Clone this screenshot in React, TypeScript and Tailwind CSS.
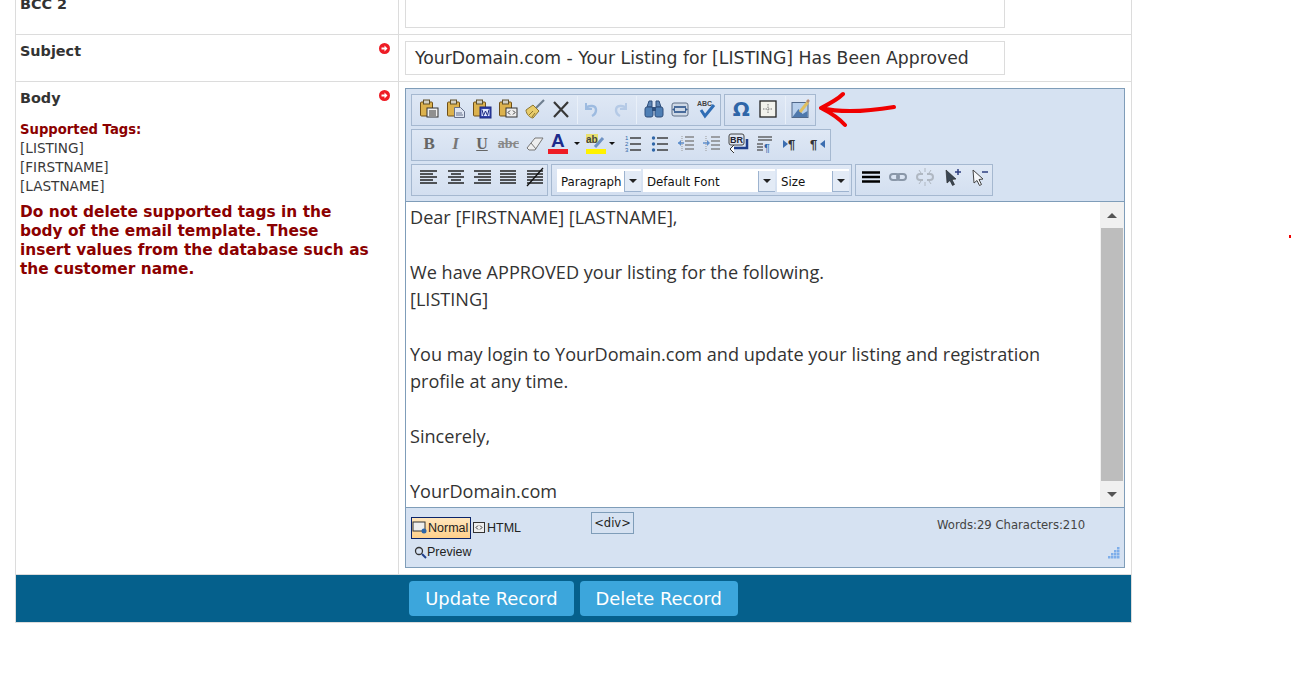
import React from 'react';

const Svg = ({ children, w = 20, h = 20 }: { children: React.ReactNode; w?: number; h?: number }) => (
  <svg width={w} height={h} viewBox={`0 0 ${w} ${h}`} fill="none">{children}</svg>
);

const Clip = ({ children }: { children?: React.ReactNode }) => (
  <Svg>
    <rect x="1.5" y="3" width="12" height="14" rx="1" fill="#dcb24e" stroke="#6f4f18" />
    <rect x="4.5" y="1" width="6" height="4" fill="#d2d0c4" stroke="#5f4f28" />
    {children}
  </Svg>
);

const lines = (rows: [number, number, number][], color = '#333', sw = 1) =>
  rows.map(([x1, x2, y], i) => <path key={i} d={`M${x1} ${y}H${x2}`} stroke={color} strokeWidth={sw} />);

const Icons: Record<string, React.ReactNode> = {
  paste: (
    <Clip>
      <rect x="8" y="9" width="11" height="9" fill="#eee" stroke="#333" />
      {lines([[10, 17, 12], [10, 17, 14], [10, 17, 16]])}
    </Clip>
  ),
  pasteText: (
    <Clip>
      <path d="M8.5 8.5h6l4 4v6h-10z" fill="#dfe6f2" stroke="#66708a" />
      {lines([[10, 16, 14], [10, 17, 16]], '#66708a')}
    </Clip>
  ),
  pasteWord: (
    <Clip>
      <rect x="8" y="8" width="11" height="11" fill="#2f3fa8" stroke="#1c2a80" />
      <rect x="9.500" y="10" width="8" height="7" fill="#dfe6ff" />
      <path d="M10 10.500l1.500 6 2-4.500 2 4.500 1.500-6" stroke="#1c2a80" />
    </Clip>
  ),
  pasteHtml: (
    <Clip>
      <rect x="8" y="9" width="11" height="9" fill="#eee" stroke="#333" />
      <path d="M12 11.500l-2 2 2 2M15 11.500l2 2-2 2" stroke="#333" />
    </Clip>
  ),
  broom: (
    <Svg>
      <path d="M19 1l-8 8" stroke="#6f7f90" strokeWidth="2.200" />
      <path d="M1 11l7-5 6 6-6 7C5 19 1 15 1 11z" fill="#e8cc6a" stroke="#8c7530" />
      <path d="M4 16l4-4M7 18l3-4" stroke="#8c7530" />
    </Svg>
  ),
  cut: (
    <Svg>
      <path d="M3 3l14 15M17 3L3 18" stroke="#383838" strokeWidth="2.200" />
    </Svg>
  ),
  undo: (
    <Svg>
      <path d="M4 4v6h6" stroke="#9dbbe0" strokeWidth="2" />
      <path d="M4 9c3-3 10-3 10 2 0 3-2 5-4 6" stroke="#9dbbe0" strokeWidth="2.400" />
    </Svg>
  ),
  redo: (
    <Svg>
      <path d="M16 4v6h-6" stroke="#b5cae6" strokeWidth="2" />
      <path d="M16 9c-3-3-10-3-10 2 0 3 2 5 4 6" stroke="#b5cae6" strokeWidth="2.400" />
    </Svg>
  ),
  find: (
    <Svg>
      <path d="M3 8l2-6h3v6zM12 8V2h3l2 6z" fill="#5f86b5" stroke="#2f4f7c" />
      <rect x="1" y="8" width="8" height="10" rx="2" fill="#4f7fb5" stroke="#2f4f7c" />
      <rect x="11" y="8" width="8" height="10" rx="2" fill="#4f7fb5" stroke="#2f4f7c" />
      <rect x="8" y="8" width="4" height="4" fill="#2f4f7c" />
    </Svg>
  ),
  replace: (
    <Svg>
      <rect x="2" y="4" width="16" height="13" rx="2" fill="#cfd9e6" stroke="#5f6f86" />
      <path d="M4 8h12M4 13h12" stroke="#4a6c9c" strokeWidth="2" />
      <path d="M2 10.500l3-2v4zM18 10.500l-3-2v4z" fill="#3b5f90" />
    </Svg>
  ),
  spell: (
    <Svg>
      <text x="1" y="7" fontSize="7" fontWeight="700" fill="#444" fontFamily="'Liberation Sans', sans-serif">ABC</text>
      <path d="M5 11l4 6 9-11" stroke="#2f6db5" strokeWidth="3" />
    </Svg>
  ),
  omega: <span className="text-[20px] font-bold leading-none text-[#2f66a8]">Ω</span>,
  table: (
    <Svg w={18} h={18}>
      <rect x="1" y="1" width="16" height="16" fill="#f2f2ec" stroke="#222" strokeWidth="1.300" />
      <path d="M9 4v10M4 9h10" stroke="#777" strokeDasharray="1.500 1" />
    </Svg>
  ),
  image: (
    <Svg>
      <rect x="1" y="3.500" width="16" height="15" fill="#b7cfec" stroke="#50688a" />
      <path d="M1.500 18l6-8 4 5 5-3v6z" fill="#4f78ab" />
      <path d="M9 13L17 3" stroke="#e0bf60" strokeWidth="3" />
      <path d="M16 3l2-2" stroke="#b98a70" strokeWidth="2.500" />
    </Svg>
  ),
  bold: <span className="font-['Liberation_Serif',serif] text-[17px] font-bold leading-none text-[#666]">B</span>,
  italic: <span className="font-['Liberation_Serif',serif] text-[17px] font-bold italic leading-none text-[#777]">I</span>,
  underline: <span className="font-['Liberation_Serif',serif] text-[16px] font-bold leading-none text-[#666] underline">U</span>,
  strike: <span className="font-['Liberation_Serif',serif] text-[14px] font-bold leading-none text-[#888] line-through">abc</span>,
  eraser: (
    <Svg>
      <path d="M2 14l8-10h8l-8 12H4z" fill="#eee" stroke="#777" />
      <path d="M6 9l5 6" stroke="#777" />
    </Svg>
  ),
  fore: (
    <div className="flex w-[20px] flex-col items-center">
      <span className="font-['Liberation_Sans',sans-serif] text-[19px] font-bold leading-[16px] text-[#1d2c8c]">A</span>
      <span className="h-[5px] w-[20px] bg-[#ee1c25]" />
    </div>
  ),
  hilite: (
    <Svg>
      <rect x="0" y="0" width="12" height="9" fill="#e8e070" />
      <text x="0" y="9" fontSize="10" fontWeight="700" fill="#444" fontFamily="'Liberation Sans', sans-serif">ab</text>
      <path d="M9 13l8-9" stroke="#6f93c4" strokeWidth="3" />
      <rect x="0" y="15" width="20" height="5" fill="#fff200" />
    </Svg>
  ),
  ol: (
    <Svg>
      {lines([[7, 18, 4], [7, 18, 10], [7, 18, 16]], '#333', 1.400)}
      <text x="2" y="6" fontSize="6" fill="#2f66a8" fontFamily="'Liberation Sans', sans-serif">1</text>
      <text x="2" y="12" fontSize="6" fill="#2f66a8" fontFamily="'Liberation Sans', sans-serif">2</text>
      <text x="2" y="18" fontSize="6" fill="#2f66a8" fontFamily="'Liberation Sans', sans-serif">3</text>
    </Svg>
  ),
  ul: (
    <Svg>
      {lines([[7, 18, 4], [7, 18, 10], [7, 18, 16]], '#333', 1.400)}
      <circle cx="3.500" cy="4" r="1.700" fill="#2f66a8" />
      <circle cx="3.500" cy="10" r="1.700" fill="#2f66a8" />
      <circle cx="3.500" cy="16" r="1.700" fill="#2f66a8" />
    </Svg>
  ),
  outdent: (
    <Svg>
      {lines([[9, 18, 3], [9, 18, 7], [9, 18, 11], [9, 18, 15]], '#777', 1.300)}
      {lines([[2, 8, 9]], '#7ea6da', 2)}
      <path d="M2 9l3-3v6z" fill="#5f8fcc" />
      <path d="M6 2v16" stroke="#999" strokeDasharray="1 1" />
    </Svg>
  ),
  indent: (
    <Svg>
      {lines([[9, 18, 3], [9, 18, 7], [9, 18, 11], [9, 18, 15]], '#777', 1.300)}
      {lines([[1, 6, 9]], '#7ea6da', 2)}
      <path d="M8 9L5 6v6z" fill="#5f8fcc" />
      <path d="M4 2v16" stroke="#999" strokeDasharray="1 1" />
    </Svg>
  ),
  br: (
    <Svg w={22} h={22}>
      <path d="M5 15h14V6" stroke="#1f3f8c" strokeWidth="2.500" />
      <path d="M6 20l-4-4 4-4" fill="#fff" stroke="#333" />
      <rect x="1" y="1" width="15" height="11" rx="2" fill="#dfe6f2" stroke="#444" />
      <text x="2" y="10" fontSize="9" fontWeight="700" fill="#223" fontFamily="'Liberation Sans', sans-serif">BR</text>
    </Svg>
  ),
  para: (
    <Svg>
      {lines([[3, 17, 3], [3, 17, 6], [2, 8, 10], [2, 8, 13], [2, 8, 16]], '#444', 1.200)}
      <text x="9" y="18" fontSize="11" fill="#2f66a8" fontFamily="'Liberation Sans', sans-serif">¶</text>
    </Svg>
  ),
  ltr: (
    <Svg>
      <path d="M2 6l5 4-5 4z" fill="#3b6db0" />
      <text x="7" y="15" fontSize="13" fontWeight="700" fill="#333" fontFamily="'Liberation Sans', sans-serif">¶</text>
    </Svg>
  ),
  rtl: (
    <Svg>
      <text x="2" y="15" fontSize="13" fontWeight="700" fill="#333" fontFamily="'Liberation Sans', sans-serif">¶</text>
      <path d="M17 6l-5 4 5 4z" fill="#3b6db0" />
    </Svg>
  ),
  left: <Svg>{lines([[1, 18, 4], [1, 14, 7], [1, 18, 10], [1, 14, 13], [1, 18, 16]], '#222', 1.500)}</Svg>,
  center: <Svg>{lines([[2, 18, 4], [5, 15, 7], [2, 18, 10], [5, 15, 13], [2, 18, 16]], '#222', 1.500)}</Svg>,
  right: <Svg>{lines([[2, 19, 4], [6, 19, 7], [2, 19, 10], [6, 19, 13], [2, 19, 16]], '#222', 1.500)}</Svg>,
  justify: <Svg>{lines([[2, 18, 4], [2, 18, 7], [2, 18, 10], [2, 18, 13], [2, 18, 16]], '#222', 1.500)}</Svg>,
  nojustify: (
    <Svg>
      {lines([[2, 18, 4], [2, 18, 7], [2, 18, 10], [2, 18, 13], [2, 18, 16]], '#222', 1.500)}
      <path d="M2 19L18 1" stroke="#111" strokeWidth="1.300" />
    </Svg>
  ),
  rule: (
    <Svg>
      <path d="M1 5.500h18M1 10h18M1 14.500h18" stroke="#000" strokeWidth="2.400" />
    </Svg>
  ),
  link: (
    <Svg>
      <rect x="2" y="7" width="9" height="6" rx="3" stroke="#8a97a8" strokeWidth="2" />
      <rect x="9" y="7" width="9" height="6" rx="3" stroke="#8a97a8" strokeWidth="2" />
    </Svg>
  ),
  unlink: (
    <Svg>
      <path d="M8 7H5a3 3 0 000 6h3M12 7h3a3 3 0 010 6h-3" stroke="#b0b8c2" strokeWidth="2" />
      <path d="M10 1v4M10 15v4M4 3l2 3M16 3l-2 3M4 17l2-3M16 17l-2-3" stroke="#b0b8c2" />
    </Svg>
  ),
  cursorPlus: (
    <Svg>
      <path d="M4 3l10 9-4 .500 2.500 5-2 1-2.500-5L5 16z" fill="#3b4652" stroke="#222" strokeWidth=".600" />
      <path d="M13 5h6M16 2v6" stroke="#2f3f80" strokeWidth="1.500" />
    </Svg>
  ),
  cursorMinus: (
    <Svg>
      <path d="M4 3l10 9-4 .500 2.500 5-2 1-2.500-5L5 16z" fill="#f5f7fa" stroke="#444" />
      <path d="M13 5h6" stroke="#2f3f80" strokeWidth="1.500" />
    </Svg>
  ),
};

const Tool = ({ name, w = 'w-[26.4px]', pb = 'pb-[3px]' }: { name: string; w?: string; pb?: string }) => (
  <div className={`flex h-full shrink-0 items-center justify-center ${pb} ${w}`}>{Icons[name]}</div>
);

const Caret = () => (
  <div className="flex h-full w-[10px] shrink-0 items-center justify-center pb-[3px]">
    <span className="h-0 w-0 border-x-[3px] border-t-[3px] border-x-transparent border-t-[#111]" />
  </div>
);

const Gap = ({ w }: { w: string }) => <div className={`h-full shrink-0 ${w}`} />;

const Sep = () => <div className="h-[28px] w-[1px] shrink-0 bg-[#e9f0f9]" />;

const Group = ({ children, className = '' }: { children: React.ReactNode; className?: string }) => (
  <div className={`flex h-[32px] shrink-0 items-center border border-[#a5b8d0] bg-gradient-to-b from-[#dfe8f5] to-[#d3dff0] ${className}`}>
    {children}
  </div>
);

const Select = ({ label, w }: { label: string; w: string }) => (
  <div className={`flex h-[23px] shrink-0 items-center bg-white pl-[4px] ${w}`}>
    <span className="grow pt-[5px] text-[11.800px] text-[#111]">{label}</span>
    <div className="mt-[2px] flex h-[21px] w-[17px] items-center justify-center border-b border-l border-[#9db3cf] bg-[#e3ebf6]">
      <span className="h-0 w-0 border-x-[4px] border-t-[4px] border-x-transparent border-t-[#222]" />
    </div>
  </div>
);

const BulletArrow = () => (
  <svg width="11" height="11" viewBox="0 0 11 11">
    <circle cx="5.500" cy="5.500" r="5.500" fill="#ee1c25" />
    <path d="M2.500 4.500h3v-2l3 3-3 3v-2h-3z" fill="#fff" />
  </svg>
);

const Row = ({ left, right, className = '' }: { left: React.ReactNode; right: React.ReactNode; className?: string }) => (
  <div className={`flex border-b border-[#dcdcdc] ${className}`}>
    <div className="w-[383px] shrink-0 border-r border-[#dcdcdc] pl-[4px] pr-[8px]">{left}</div>
    <div className="grow pl-[6px]">{right}</div>
  </div>
);

const Label = ({ text, arrow = true }: { text: string; arrow?: boolean }) => (
  <div className="flex items-start justify-between pt-[8px]">
    <span className="text-[14.400px] font-bold leading-[17px] text-[#333]">{text}</span>
    {arrow && <span className="block"><BulletArrow /></span>}
  </div>
);

const bodyLines = [
  'Dear [FIRSTNAME] [LASTNAME],',
  '',
  'We have APPROVED your listing for the following.',
  '[LISTING]',
  '',
  'You may login to YourDomain.com and update your listing and registration',
  'profile at any time.',
  '',
  'Sincerely,',
  '',
  'YourDomain.com',
];

const gripDots: [number, number][] = [
  [9, 0], [9, 3], [6, 3], [9, 6], [6, 6], [3, 6], [9, 9], [6, 9], [3, 9], [0, 9],
];

export default function App() {
  return (
    <div className="relative h-[682px] w-[1291px] overflow-hidden bg-white font-['DejaVu_Sans',sans-serif]">
      <div className="ml-[15px] w-[1117px] border-x border-b border-[#dcdcdc]">
        <Row
          className="h-[35px]"
          left={<div className="-mt-[12px]"><Label text="BCC 2" arrow={false} /></div>}
          right={<div className="h-[28px] w-[600px] border border-t-0 border-[#dcdcdc]" />}
        />
        <Row
          className="h-[47px]"
          left={<Label text="Subject" />}
          right={
            <div className="mt-[6px] flex h-[34px] w-[600px] items-center border border-[#dcdcdc] pl-[9px] pt-[1px] text-[17.250px] whitespace-nowrap text-[#333]">
              YourDomain.com - Your Listing for [LISTING] Has Been Approved
            </div>
          }
        />
        <Row
          className="h-[493px]"
          left={
            <div>
              <Label text="Body" />
              <div className="pt-[13px] text-[13.600px] leading-[19px] text-[#3a3a3a]">
                <div className="text-[13.200px] font-bold text-[#8b0000]">Supported Tags:</div>
                <div>[LISTING]</div>
                <div>[FIRSTNAME]</div>
                <div>[LASTNAME]</div>
              </div>
              <p className="mt-[7px] text-[15.400px] font-bold leading-[19px] whitespace-nowrap text-[#8b0000]">
                Do not delete supported tags in the<br />
                body of the email template. These<br />
                insert values from the database such as<br />
                the customer name.
              </p>
            </div>
          }
          right={
            <div className="mt-[6px] w-[720px] border border-[#7f9db9] bg-[#d6e2f2]">
              <div className="flex h-[113px] flex-col gap-[3px] border-b border-[#7f9db9] pl-[5px] pt-[5px]">
                <div className="flex gap-[3px]">
                  <Group className="w-[310px] pl-[4px]">
                    {['paste', 'pasteText', 'pasteWord', 'pasteHtml', 'broom', 'cut'].map((n) => <Tool key={n} name={n} />)}
                    <Gap w="w-[3px]" />
                    <Sep />
                    <Tool name="undo" w="w-[28px]" /><Tool name="redo" w="w-[28px]" />
                    <Gap w="w-[2px]" />
                    <Sep />
                    <Gap w="w-[4px]" />
                    {['find', 'replace', 'spell'].map((n) => <Tool key={n} name={n} w="w-[26px]" />)}
                  </Group>
                  <Group className="w-[92px] pl-[3px]">
                    <Tool name="omega" /><Tool name="table" />
                    <Gap w="w-[4px]" />
                    <Sep />
                    <Gap w="w-[2px]" />
                    <Tool name="image" />
                  </Group>
                </div>
                <Group className="w-[420px] pl-[4px]">
                  {['bold', 'italic', 'underline', 'strike', 'eraser'].map((n) => <Tool key={n} name={n} />)}
                  <Tool name="fore" w="w-[20px]" />
                  <Gap w="w-[4px]" />
                  <Caret />
                  <Gap w="w-[4px]" />
                  <Tool name="hilite" w="w-[20px]" />
                  <Gap w="w-[1px]" />
                  <Caret />
                  <Gap w="w-[3px]" />
                  {['ol', 'ul', 'outdent', 'indent', 'br', 'para', 'ltr', 'rtl'].map((n) => <Tool key={n} name={n} />)}
                </Group>
                <div className="flex gap-[3px]">
                  <Group className="w-[137px] pl-[4px]">
                    {['left', 'center', 'right', 'justify', 'nojustify'].map((n) => <Tool key={n} name={n} pb="pb-[6px]" />)}
                  </Group>
                  <Group className="w-[301px] gap-[2px] pl-[5px]">
                    <Select label="Paragraph" w="w-[84px]" />
                    <Select label="Default Font" w="w-[132px]" />
                    <Select label="Size" w="w-[72px]" />
                  </Group>
                  <Group className="w-[138px] pl-[1px]">
                    {['rule', 'link', 'unlink', 'cursorPlus', 'cursorMinus'].map((n) => <Tool key={n} name={n} w="w-[27px]" pb="pb-[6px]" />)}
                  </Group>
                </div>
              </div>
              <div className="flex h-[305px] bg-white">
                <div className="grow overflow-hidden pl-[4px] pt-[2px] font-['Open_Sans',sans-serif] text-[18.100px] leading-[27.400px] text-[#333]">
                  {bodyLines.map((l, i) => <div key={i} className="h-[27.400px] whitespace-nowrap">{l}</div>)}
                </div>
                <div className="flex w-[24px] shrink-0 flex-col items-center bg-[#f0f0f0]">
                  <div className="flex h-[26px] items-center justify-center"><span className="h-0 w-0 border-x-[5px] border-b-[5px] border-x-transparent border-b-[#555]" /></div>
                  <div className="h-[253px] w-[22px] bg-[#bdbdbd]" />
                  <div className="flex h-[26px] items-center justify-center"><span className="h-0 w-0 border-x-[5px] border-t-[5px] border-x-transparent border-t-[#555]" /></div>
                </div>
              </div>
              <div className="relative flex h-[60px] border-t border-[#7f9db9] pl-[5px]">
                <div className="w-[180px] pt-[9px] font-['Liberation_Sans',sans-serif] text-[12.500px] text-[#222]">
                  <div className="flex items-center">
                    <div className="flex h-[22px] w-[60px] shrink-0 items-center border border-[#0a246a] bg-gradient-to-b from-[#ffe6bd] to-[#ffd08a]">
                      <svg width="16" height="14" viewBox="0 0 16 14" fill="none"><rect x="1" y="1" width="12" height="9" stroke="#333" fill="#eee" /><circle cx="12" cy="10" r="2.500" fill="#2f66a8" /></svg>
                      <span>Normal</span>
                    </div>
                    <svg className="ml-[2px] mr-[2px]" width="12" height="12" viewBox="0 0 12 12" fill="none"><rect x=".500" y=".500" width="11" height="10" stroke="#333" fill="#eee" /><path d="M5 3.500L3 5.500l2 2M7 3.500l2 2-2 2" stroke="#333" /></svg>
                    <span>HTML</span>
                  </div>
                  <div className="mt-[4px] flex items-center pl-[3px]">
                    <svg width="13" height="13" viewBox="0 0 13 13" fill="none"><circle cx="5" cy="5" r="3.500" stroke="#333" strokeWidth="1.300" /><path d="M8 8l4 4" stroke="#1f3f8c" strokeWidth="2" /></svg>
                    <span>Preview</span>
                  </div>
                </div>
                <div className="mt-[4px] flex h-[22px] w-[43px] items-center justify-center border border-[#7f9db9] pt-[2px] text-[11.500px] text-[#222]">&lt;div&gt;</div>
                <div className="ml-[303px] pt-[10px] text-[11.650px] leading-[14px] whitespace-nowrap text-[#444]">Words:29 Characters:210</div>
                <svg className="absolute bottom-[8px] right-[4px]" width="12" height="12" viewBox="0 0 12 12">
                  {gripDots.map(([x, y]) => <rect key={`${x}-${y}`} x={x} y={y} width="2.500" height="2.500" fill="#7eaeea" />)}
                </svg>
              </div>
            </div>
          }
        />
        <div className="flex h-[47px] items-center justify-center gap-[6px] bg-[#05608c]">
          <button className="h-[35px] rounded-[4px] bg-[#3ca6dc] px-[16px] pt-[1px] text-[17.900px] text-white">Update Record</button>
          <button className="h-[35px] rounded-[4px] bg-[#3ca6dc] px-[16px] pt-[1px] text-[17.900px] text-white">Delete Record</button>
        </div>
      </div>
      <svg className="absolute left-[819px] top-[91px]" width="80" height="38" viewBox="0 0 80 38" fill="none">
        <path d="M2 17C18 21 45 21 75 16M24 3C18 9 10 13 2 17C8 20 18 25 26 34" stroke="#f00000" strokeWidth="4" strokeLinecap="round" strokeLinejoin="round" />
      </svg>
      <div className="absolute left-[1289px] top-[235px] h-[3px] w-[2px] bg-[#f00000]" />
    </div>
  );
}
